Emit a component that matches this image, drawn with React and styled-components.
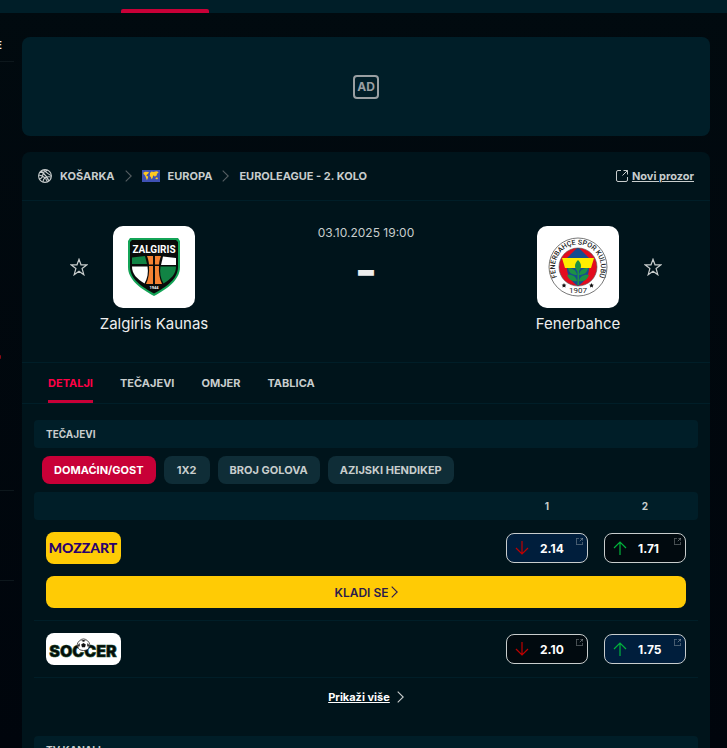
import React from 'react';
import styled, { createGlobalStyle } from 'styled-components';

const GlobalStyle = createGlobalStyle`
    * {
        box-sizing: border-box;
    }
    body {
        margin: 0;
        background-color: #010a0f;
        color: #c8cdcd;
        font-family: Inter, 'Liberation Sans', sans-serif;
        font-size: 11px;
    }
    button {
        border: 0;
        padding: 0;
        background: none;
        color: inherit;
        font: inherit;
        cursor: pointer;
    }
    a {
        color: inherit;
        text-decoration: none;
    }
    svg {
        display: block;
        flex: none;
    }
`;

const Page = styled.div`
    display: flex;
    flex-direction: column;
    height: 100vh;
    overflow: hidden;
    background: linear-gradient(#010a0f, #00050c);
`;

const TopBar = styled.header`
    display: flex;
    flex: none;
    align-items: flex-end;
    height: 13px;
    padding-left: 121px;
    background-color: #001e28;
`;

const TopBarMarker = styled.span`
    width: 88px;
    height: 4px;
    border-radius: 2px 2px 0 0;
    background-color: #c80037;
`;

const Columns = styled.div`
    display: grid;
    grid-template-columns: 14px minmax(0, 1fr);
    flex: 1;
    min-height: 0;
`;

const Sidebar = styled.aside`
    overflow: hidden;
`;

const SidebarBlock = styled.div`
    display: flex;
    align-items: ${({ $top }) => ($top ? 'flex-start' : 'center')};
    justify-content: flex-end;
    height: ${({ $height }) => $height}px;
    padding-right: 12px;
    padding-top: ${({ $top }) => $top || 16}px;
    border-bottom: 1px solid #0d171c;
    color: #eeeeee;
    font-weight: 700;
`;

const LiveDot = styled.span`
    flex: none;
    width: 4px;
    height: 4px;
    margin-right: 1px;
    border-radius: 1px;
    background-color: #8c0a14;
`;

const Main = styled.main`
    display: flex;
    flex-direction: column;
    gap: 16px;
    padding: 24px 17px 0 8px;
`;

const AdZone = styled.div`
    display: flex;
    flex: none;
    align-items: center;
    justify-content: center;
    height: 99px;
    border-radius: 8px;
    background-color: #001e28;
`;

const AdBadge = styled.span`
    display: flex;
    align-items: center;
    justify-content: center;
    width: 26px;
    height: 24px;
    border: 2px solid #999fa2;
    border-radius: 4px;
    color: #999fa2;
    font-size: 12px;
    font-weight: 700;
`;

const Panel = styled.section`
    flex: none;
    border-radius: 8px;
    background-color: #00141b;
`;

const Breadcrumb = styled.nav`
    display: flex;
    align-items: center;
    gap: 10px;
    height: 49px;
    padding: 0 16px;
    border-bottom: 1px solid #001e28;
    font-weight: 700;
`;

const Crumb = styled.a`
    display: flex;
    align-items: center;
    gap: 8px;
    text-transform: uppercase;
`;

const NewWindow = styled.a`
    display: flex;
    align-items: center;
    gap: 4px;
    margin-left: auto;

    span {
        text-decoration: underline;
        text-underline-offset: 1px;
    }
`;

const Duel = styled.div`
    display: flex;
    align-items: flex-start;
    height: 162px;
    padding: 25px 41px 0;
    border-bottom: 1px solid #001e28;
`;

const StarButton = styled.button`
    display: flex;
    align-items: center;
    justify-content: center;
    width: 32px;
    height: 82px;
`;

const Team = styled.div`
    display: flex;
    flex-direction: column;
    align-items: center;
    gap: 6px;
    width: 118px;
    color: #eeeeee;
    font-size: 15px;
    line-height: 20px;
`;

const Crest = styled.div`
    display: flex;
    align-items: center;
    justify-content: center;
    width: 82px;
    height: 82px;
    border-radius: 10px;
    background-color: #ffffff;
`;

const Score = styled.div`
    display: flex;
    flex: 1;
    flex-direction: column;
    align-items: center;
    font-size: 12px;
    line-height: 14px;
`;

const Result = styled.span`
    margin-top: 8px;
    color: #eeeeee;
    font-size: 48px;
    font-weight: 700;
    line-height: 44px;
`;

const Tabs = styled.nav`
    display: flex;
    gap: 27px;
    height: 41px;
    padding: 0 26px;
    border-bottom: 1px solid #001e28;
`;

const Tab = styled.a`
    display: flex;
    align-items: center;
    border-top: 3px solid transparent;
    color: ${({ $active }) => ($active ? '#ff0046' : 'inherit')};
    box-shadow: ${({ $active }) => ($active ? 'inset 0 -3px #c80037' : 'none')};
    padding-bottom: 3px;
    font-weight: 700;
    text-transform: uppercase;
`;

const Body = styled.div`
    padding: 16px 12px;
`;

const SectionTitle = styled.h2`
    display: flex;
    align-items: center;
    height: 28px;
    margin: 0;
    padding: 0 12px;
    border-radius: 4px;
    background-color: #001e28;
    font-size: 10px;
    font-weight: 700;
    text-transform: uppercase;
`;

const Filters = styled.div`
    display: flex;
    gap: 8px;
    padding: 8px;
`;

const Filter = styled.button`
    min-width: 46px;
    height: 28px;
    padding: 0 12px;
    border-radius: 8px;
    background-color: ${({ $active }) => ($active ? '#c80037' : '#0f2d37')};
    color: ${({ $active }) => ($active ? '#ffffff' : 'inherit')};
    font-weight: 700;
    text-transform: uppercase;
`;

const OddsTable = styled.table`
    width: 100%;
    border-spacing: 0;
    table-layout: fixed;
`;

const HeadCell = styled.th`
    width: ${({ $width }) => $width || 'auto'};
    height: 28px;
    padding: ${({ $last }) => ($last ? '0 12px 0 8px' : '0 8px')};
    background-color: #001e28;
    font-size: 10px;
    font-weight: 700;

    &:first-child {
        border-radius: 4px 0 0 4px;
    }
    &:last-child {
        border-radius: 0 4px 4px 0;
    }
`;

const BookmakerCell = styled.td`
    height: ${({ $divided }) => ($divided ? 57 : 56)}px;
    padding: 0 12px;
    border-bottom: ${({ $divided }) => ($divided ? '1px solid #001e28' : '0')};
`;

const OddCell = styled(BookmakerCell)`
    padding: ${({ $last }) => ($last ? '0 12px 0 8px' : '0 8px')};
`;

const BetCell = styled.td`
    padding: 0 12px 12px;
    border-bottom: 1px solid #001e28;
`;

const BookmakerLogo = styled.a`
    display: flex;
    width: 75px;
    height: 32px;
    overflow: hidden;
    border-radius: 8px;
`;

const Odd = styled.button`
    position: relative;
    display: flex;
    align-items: center;
    gap: 11px;
    width: 100%;
    height: 30px;
    padding: 0 8px;
    border: 1px solid #c8cdcd;
    border-radius: 8px;
    background-color: ${({ $best }) => ($best ? '#001e3c' : '#010a0f')};
    color: #ffffff;
    font-size: 12px;
    font-weight: 700;
`;

const OddCorner = styled.span`
    position: absolute;
    top: 4px;
    right: 4px;
    opacity: 0.8;
`;

const BetButton = styled.button`
    display: flex;
    align-items: center;
    justify-content: center;
    gap: 2px;
    width: 100%;
    height: 32px;
    border-radius: 8px;
    background-color: #ffcb05;
    color: #2b1b4d;
    font-size: 12px;
    font-weight: 600;
`;

const ShowMore = styled.button`
    display: flex;
    align-items: center;
    justify-content: center;
    gap: 7px;
    width: 100%;
    height: 38px;
    margin-bottom: 20px;
    color: #ffffff;
    font-weight: 700;

    span {
        text-decoration: underline;
        text-underline-offset: 1px;
    }
`;

const Chevron = ({ color = '#c8cdcd' }) => (
    <svg width="7" height="12" viewBox="0 0 7 12" fill="none" stroke={color} strokeWidth="1.100">
        <path d="M.7.6 6.2 6 .7 11.4" />
    </svg>
);

const ExternalIcon = ({ size = 12 }) => (
    <svg width={size} height={size} viewBox="0 0 12 12" fill="none" stroke="#c8cdcd">
        <path d="M5 .5H2A1.5 1.5 0 0 0 .5 2v8A1.5 1.5 0 0 0 2 11.5h8a1.5 1.5 0 0 0 1.5-1.5V7M7.5.5h4v4M11.5.5l-5 5" />
    </svg>
);

const Basketball = () => (
    <svg width="14" height="14" viewBox="0 0 14 14" fill="none" stroke="#c8cdcd" strokeWidth="1.100">
        <circle cx="7" cy="7" r="6.4" />
        <path d="M3 2c3 2.500 6.500 6.500 8 10M5.500.8C8 3 11 6 13.300 6.500M.7 6C4 6.500 8 9 9.500 13M2 3.500c2 .2 5 .2 7-2.500M5 13c0-3 2-6 8-5M1.500 10c2-.5 3.500-3 3.500-6" />
    </svg>
);

const WorldFlag = () => (
    <svg width="18" height="12" viewBox="0 0 18 12">
        <path fill="#3f51b5" d="M0 0h18v12H0z" />
        <path
            fill="#ffc91f"
            d="m1.500 2.500 2-.8 3.500.3-.8 1.500-1.400 1.200-.4 1 1.800.9-.3 1.500-1 2.200-.7-2-.7-1.700-.7-1.500-1.300-1zM8 3l1.500-1.400 2 .4 3-.7 2 .8-.4 1-1.300.7.200 1.400-1.500.8-.5 1-1-1.500-.9.200-.5 2.300-1 1.300-.8-2.300-1.200-1 .4-1.300zM13.500 8l1.500-.7 1 1-.8 1-1.500-.3z"
        />
    </svg>
);

const Star = () => (
    <svg width="18" height="18" viewBox="0 0 18 18" fill="none" stroke="#c8cdcd" strokeWidth="1.200">
        <path d="m9 1.300 2 5.500h6l-4.900 3.700 1.700 6.200L9 13.200l-4.800 3.500 1.700-6.200L1 6.800h6z" />
    </svg>
);

const Arrow = ({ up }) => (
    <svg width="14" height="14" viewBox="0 0 14 14" fill="none" stroke={up ? '#00b33c' : '#c00000'} strokeWidth="1.200">
        <path d={up ? 'M7 14V1M1 7l6-6 6 6' : 'M7 0v13M1 7l6 6 6-6'} />
    </svg>
);

const ZalgirisCrest = () => (
    <svg width="52" height="58" viewBox="0 0 52 58">
        <path fill="#14a457" d="M2 0h48l2 3v26c0 13-13 22-26 29C13 51 0 42 0 29V3z" />
        <path fill="#090b0a" d="M4 2h44l2 2v25c0 12-12 20-24 26.500C14 49 2 41 2 29V4z" />
        <path fill="#118344" d="M4 19.500 17 18l2 8H4z" />
        <path fill="#fff" d="M35 18.500 48 20v7H33z" />
        <path fill="#fff" d="M4 28.500h15.500c1 6 0 12-3 17C9 41 4 36 4 28.500z" />
        <path fill="#118344" d="M32.500 28.500H48c0 7.500-5 12.500-12.500 17-3-5-4-11-3-17z" />
        <path
            fill="#f58232"
            d="M19 18h6v8.500h-4c-.3-3-1-6-2-8.500zM27 18h6c-1 2.500-1.700 5.500-2 8.500h-4zM21 28h4v18h-7c2.500-5 3.500-12 3-18zM27 28h4c-.5 6 .5 13 3 18h-7z"
        />
        <text x="26" y="15" fill="#fff" fontFamily="Roboto" fontSize="10" fontWeight="700" textAnchor="middle">
            ZALGIRIS
        </text>
        <text x="26" y="51" fill="#fff" fontFamily="Roboto" fontSize="4" fontWeight="700" textAnchor="middle">
            1944
        </text>
    </svg>
);

const FenerbahceCrest = () => (
    <svg width="60" height="60" viewBox="0 0 60 60">
        <defs>
            <path id="ring" d="M13 46A23 23 0 1 1 47 46" />
            <clipPath id="disc">
                <circle cx="30" cy="30" r="19" />
            </clipPath>
        </defs>
        <circle cx="30" cy="30" r="29" fill="#fff" stroke="#555" strokeWidth=".8" />
        <g clipPath="url(#disc)">
            <path fill="#e30c1e" d="M11 11h38v38H11z" />
            <path fill="#164c8f" d="m30 10 11 11v10c0 8-5 14-11 18-6-4-11-10-11-18V21z" />
            <path fill="#ffed00" d="M14 21h32l-3 10H17z" />
        </g>
        <g fill="#1c9145">
            <path d="M29.500 48V30h1.500v18z" />
            <path d="M30 23c4 4 4 8 0 12-4-4-4-8 0-12zM29 38c-5 0-8-2-9-7 5 0 8 2 9 7zM31 38c5 0 8-2 9-7-5 0-8 2-9 7zM29 44c-5 1-8-1-10-6 5-1 9 1 10 6zM31 44c5 1 8-1 10-6-5-1-9 1-10 6z" />
        </g>
        <circle cx="30" cy="30" r="19" fill="none" stroke="#555" strokeWidth=".6" />
        <text fill="#222" fontFamily="Roboto" fontSize="7" fontWeight="500" textAnchor="middle">
            <textPath href="#ring" startOffset="50%">
                FENERBAHÇE SPOR KULUBÜ
            </textPath>
        </text>
        <text x="30" y="56" fill="#222" fontFamily="Roboto" fontSize="8" fontWeight="400" textAnchor="middle">
            1907
        </text>
        <path
            fill="#111"
            d="m16 46 .7 1.500 1.700.2-1.200 1.100.3 1.700-1.500-.8-1.500.8.300-1.700-1.200-1.100 1.700-.2zM43.500 46l.7 1.500 1.700.2-1.200 1.100.3 1.700-1.500-.8-1.500.8.300-1.700-1.200-1.100 1.700-.2z"
        />
    </svg>
);

const MozzartLogo = () => (
    <svg width="75" height="32" viewBox="0 0 75 32">
        <path fill="#ffcb05" d="M0 0h75v32H0z" />
        <text x="37" y="21" fill="#28006e" fontFamily="Lato" fontSize="14" fontWeight="900" textAnchor="middle">
            MOZZART
        </text>
    </svg>
);

const SoccerLogo = () => (
    <svg width="75" height="32" viewBox="0 0 75 32">
        <path fill="#fff" d="M0 0h75v32H0z" />
        <text
            x="37"
            y="24"
            fill="#050d09"
            stroke="#174d2b"
            strokeWidth=".6"
            fontFamily="Inter"
            fontSize="16"
            fontWeight="900"
            textAnchor="middle"
        >
            SOCCER
        </text>
        <path
            fill="#fff"
            stroke="#222"
            strokeWidth=".8"
            d="M32.500 15.500a6 6 0 1 1 10 0c-1 1.300-3 2-5 2s-4-.7-5-2z"
        />
        <path
            fill="#111"
            d="m37.500 10 2.300 1.600-.8 2.600h-3l-.8-2.600zM35 7.800l2.500-.8 2.500.8-2.500 1zM32 12l1.500-2 .3 2.500-1 2zM43 12l-1.500-2-.3 2.500 1 2z"
        />
    </svg>
);

const bookmakers = [
    {
        name: 'Mozzart',
        Logo: MozzartLogo,
        bet: true,
        odds: [{ value: '2.14', best: true }, { value: '1.71', up: true }],
    },
    {
        name: 'Soccer',
        Logo: SoccerLogo,
        odds: [{ value: '2.10' }, { value: '1.75', up: true, best: true }],
    },
];

const tabs = ['Detalji', 'Tečajevi', 'Omjer', 'Tablica'];
const filters = ['Domaćin/Gost', '1x2', 'Broj golova', 'Azijski hendikep'];

const Bookmaker = ({ name, Logo, bet, odds }) => (
    <>
        <tr>
            <BookmakerCell $divided={!bet}>
                <BookmakerLogo href="#" aria-label={name}>
                    <Logo />
                </BookmakerLogo>
            </BookmakerCell>
            {odds.map(({ value, up, best }, i) => (
                <OddCell key={value} $divided={!bet} $last={i === 1}>
                    <Odd $best={best}>
                        <Arrow up={up} />
                        {value}
                        <OddCorner>
                            <ExternalIcon size={7} />
                        </OddCorner>
                    </Odd>
                </OddCell>
            ))}
        </tr>
        {bet && (
            <tr>
                <BetCell colSpan={3}>
                    <BetButton>
                        KLADI SE
                        <Chevron color="#2b1b4d" />
                    </BetButton>
                </BetCell>
            </tr>
        )}
    </>
);

const App = () => (
    <Page>
        <GlobalStyle />
        <TopBar>
            <TopBarMarker />
        </TopBar>
        <Columns>
            <Sidebar>
                <SidebarBlock $height={49}>E</SidebarBlock>
                <SidebarBlock $height={429} $top={293}>
                    <LiveDot />
                </SidebarBlock>
                <SidebarBlock $height={90} />
            </Sidebar>
            <Main>
                <AdZone>
                    <AdBadge>AD</AdBadge>
                </AdZone>
                <Panel>
                    <Breadcrumb>
                        <Crumb href="#">
                            <Basketball />
                            Košarka
                        </Crumb>
                        <Chevron color="#555e62" />
                        <Crumb href="#">
                            <WorldFlag />
                            Europa
                        </Crumb>
                        <Chevron color="#555e62" />
                        <Crumb href="#">Euroleague - 2. kolo</Crumb>
                        <NewWindow href="#">
                            <ExternalIcon />
                            <span>Novi prozor</span>
                        </NewWindow>
                    </Breadcrumb>
                    <Duel>
                        <StarButton aria-label="Zalgiris Kaunas">
                            <Star />
                        </StarButton>
                        <Team>
                            <Crest>
                                <ZalgirisCrest />
                            </Crest>
                            Zalgiris Kaunas
                        </Team>
                        <Score>
                            03.10.2025 19:00
                            <Result>-</Result>
                        </Score>
                        <Team>
                            <Crest>
                                <FenerbahceCrest />
                            </Crest>
                            Fenerbahce
                        </Team>
                        <StarButton aria-label="Fenerbahce">
                            <Star />
                        </StarButton>
                    </Duel>
                    <Tabs>
                        {tabs.map((tab, i) => (
                            <Tab key={tab} href="#" $active={i === 0}>
                                {tab}
                            </Tab>
                        ))}
                    </Tabs>
                    <Body>
                        <SectionTitle>Tečajevi</SectionTitle>
                        <Filters>
                            {filters.map((filter, i) => (
                                <Filter key={filter} $active={i === 0}>
                                    {filter}
                                </Filter>
                            ))}
                        </Filters>
                        <OddsTable>
                            <thead>
                                <tr>
                                    <HeadCell />
                                    <HeadCell $width="98px">1</HeadCell>
                                    <HeadCell $width="102px" $last>2</HeadCell>
                                </tr>
                            </thead>
                            <tbody>
                                {bookmakers.map((bookmaker) => (
                                    <Bookmaker key={bookmaker.name} {...bookmaker} />
                                ))}
                            </tbody>
                        </OddsTable>
                        <ShowMore>
                            <span>Prikaži više</span>
                            <Chevron />
                        </ShowMore>
                        <SectionTitle>TV kanali</SectionTitle>
                    </Body>
                </Panel>
            </Main>
        </Columns>
    </Page>
);

export default App;
